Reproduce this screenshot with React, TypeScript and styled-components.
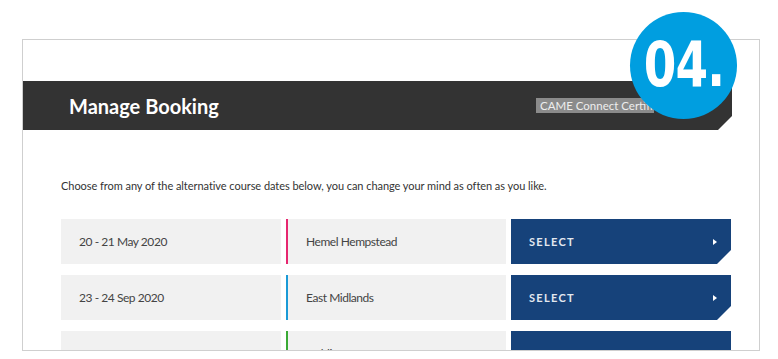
import React from "react";
import styled, { createGlobalStyle } from "styled-components";

const GlobalStyle = createGlobalStyle`
  body {
    margin: 0;
    background: #fff;
    font-family: Lato, "Open Sans", sans-serif;
  }
`;

const Page = styled.div`
  position: relative;
  width: 778px;
  height: 359px;
  padding: 39px 0 0 22px;
  box-sizing: border-box;
  overflow: hidden;
`;

const Frame = styled.div`
  width: 738px;
  height: 312px;
  box-sizing: border-box;
  border: 1px solid #cfcfcf;
  padding-top: 41px;
  overflow: hidden;
`;

const Bar = styled.div`
  height: 49px;
  margin-right: 27px;
  padding-left: 46px;
  display: flex;
  align-items: center;
  background: #333;
  clip-path: polygon(0 0, 100% 0, 100% calc(100% - 14px), calc(100% - 14px) 100%, 0 100%);
`;

const Title = styled.h1`
  margin: 0;
  font-size: 20px;
  font-weight: 700;
  color: #fff;
`;

const Badge = styled.span`
  margin-left: auto;
  margin-right: 78px;
  width: 110px;
  height: 15px;
  padding: 0 4px;
  overflow: hidden;
  white-space: nowrap;
  background: #8b8b8b;
  color: #eee;
  font-size: 11.5px;
  line-height: 15px;
`;

const Step = styled.div`
  position: absolute;
  left: 630px;
  top: 12px;
  width: 107px;
  height: 107px;
  border-radius: 50%;
  background: #009ee0;
  color: #fff;
  display: flex;
  align-items: center;
  justify-content: center;
  font-family: "DejaVu Sans Condensed", "DejaVu Sans", sans-serif;
  font-weight: 700;
  font-size: 62px;
  letter-spacing: -1px;
`;

const StepText = styled.span`
  display: inline-block;
  transform: translateY(-1px) scaleX(0.84);
`;

const Content = styled.div`
  padding: 49px 27px 0 38px;
`;

const Intro = styled.p`
  margin: 0 0 26px;
  font-size: 11px;
  line-height: 14px;
  letter-spacing: -0.05px;
  color: #333;
`;

const List = styled.div`
  display: flex;
  flex-direction: column;
  gap: 11px;
`;

const Row = styled.div`
  display: grid;
  grid-template-columns: 220px 220px 220px;
  gap: 5px;
  height: 45px;
`;

const Cell = styled.div<{ accent?: string }>`
  display: flex;
  align-items: center;
  padding-left: 18px;
  background: #f1f1f1;
  border-left: ${({ accent }) => (accent ? `2px solid ${accent}` : "none")};
  font-size: 12px;
  letter-spacing: -0.45px;
  color: #444;
`;

const SelectButton = styled.button`
  display: flex;
  align-items: center;
  justify-content: space-between;
  padding: 0 14px 0 18px;
  border: none;
  background: #16427a;
  color: #e3e8ef;
  font-family: Lato, sans-serif;
  font-size: 11px;
  font-weight: 700;
  letter-spacing: 1.3px;
  cursor: pointer;
  clip-path: polygon(0 0, 100% 0, 100% calc(100% - 14px), calc(100% - 14px) 100%, 0 100%);
`;

const Arrow = styled.span`
  width: 0;
  height: 0;
  border-top: 3.5px solid transparent;
  border-bottom: 3.5px solid transparent;
  border-left: 4px solid #fff;
`;

const courses = [
  { date: "20 - 21 May 2020", place: "Hemel Hempstead", color: "#e6266f" },
  { date: "23 - 24 Sep 2020", place: "East Midlands", color: "#1a9ad6" },
  { date: "28 - 29 Oct 2020", place: "Dublin", color: "#3aaa35" },
];

const App = () => {
  return (
    <>
      <GlobalStyle />
      <Page>
        <Frame>
          <Bar>
            <Title>Manage Booking</Title>
            <Badge>CAME Connect Certified</Badge>
          </Bar>
          <Content>
            <Intro>
              Choose from any of the alternative course dates below, you can
              change your mind as often as you like.
            </Intro>
            <List>
              {courses.map((c) => (
                <Row key={c.date}>
                  <Cell>{c.date}</Cell>
                  <Cell accent={c.color}>{c.place}</Cell>
                  <SelectButton>
                    SELECT
                    <Arrow />
                  </SelectButton>
                </Row>
              ))}
            </List>
          </Content>
        </Frame>
        <Step>
          <StepText>04.</StepText>
        </Step>
      </Page>
    </>
  );
};

export default App;
